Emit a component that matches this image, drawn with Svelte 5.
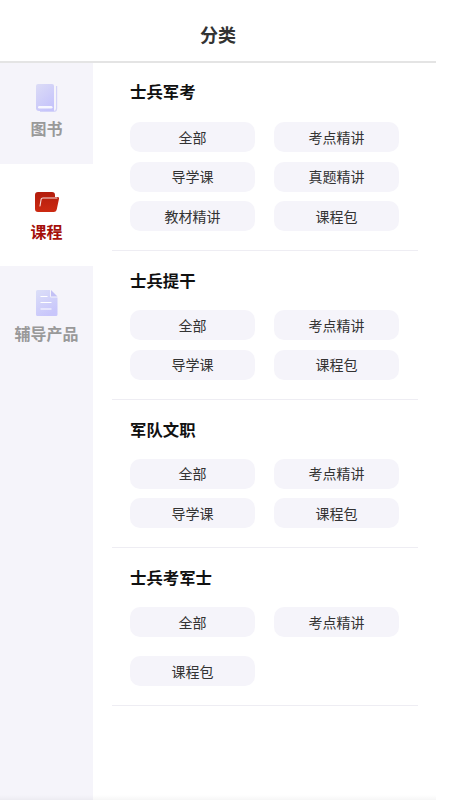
<script>
  // Sidebar tabs and course groups
  const tabs = [
    { name: 'book', label: '图书' },
    { name: 'folder', label: '课程', active: true },
    { name: 'doc', label: '辅导产品' }
  ];

  const groups = [
    { title: '士兵军考', items: ['全部', '考点精讲', '导学课', '真题精讲', '教材精讲', '课程包'] },
    { title: '士兵提干', items: ['全部', '考点精讲', '导学课', '课程包'] },
    { title: '军队文职', items: ['全部', '考点精讲', '导学课', '课程包'] },
    { title: '士兵考军士', items: ['全部', '考点精讲', '课程包'], loose: true }
  ];
</script>

<div class="page">
  <header class="top">分类</header>
  <div class="body">
    <nav class="side">
      {#each tabs as tab}
        <div class="tab {tab.name}" class:active={tab.active}>
          {#if tab.name === 'book'}
            <svg width="24" height="30" viewBox="0 0 24 30">
              <defs>
                <linearGradient id="bookFill" x1="0" y1="0" x2="0.6" y2="1">
                  <stop offset="0" stop-color="#dcdcf6" />
                  <stop offset="1" stop-color="#c6c4fb" />
                </linearGradient>
              </defs>
              <path d="M21.6 3v22.5a3 3 0 0 1-3 3H5" fill="none" stroke="#d4d3f8" stroke-width="1.2" />
              <path d="M3 1h14a2 2 0 0 1 2 2v25H4a3 3 0 0 1-3-3V3a2 2 0 0 1 2-2z" fill="url(#bookFill)" />
              <rect x="3" y="23" width="14.5" height="2.6" rx="1.3" fill="#fff" opacity="0.85" />
            </svg>
          {:else if tab.name === 'folder'}
            <svg width="24" height="20" viewBox="0 0 24 20">
              <defs>
                <linearGradient id="folderFill" x1="0" y1="0" x2="0" y2="1">
                  <stop offset="0" stop-color="#b31c0c" />
                  <stop offset="1" stop-color="#cc2a12" />
                </linearGradient>
              </defs>
              <path d="M3 0h14a3 3 0 0 1 3 3v2h2.5a1.5 1.5 0 0 1 1.5 1.8l-2.2 10.5A3 3 0 0 1 19 20H3a3 3 0 0 1-3-3V3a3 3 0 0 1 3-3z" fill="url(#folderFill)" />
              <path d="M5 14l1-6a2 2 0 0 1 2-2h14" fill="none" stroke="#fff" stroke-width="1.1" stroke-linecap="round" opacity="0.85" />
            </svg>
          {:else}
            <svg width="22" height="26" viewBox="0 0 22 26">
              <defs>
                <linearGradient id="docFill" x1="0" y1="0" x2="0.5" y2="1">
                  <stop offset="0" stop-color="#dcdff8" />
                  <stop offset="1" stop-color="#c8c6fb" />
                </linearGradient>
              </defs>
              <path d="M1.5 0H14v6a1.5 1.5 0 0 0 1.5 1.5H21.5V24.5A1.5 1.5 0 0 1 20 26H1.5A1.5 1.5 0 0 1 0 24.5V1.5A1.5 1.5 0 0 1 1.5 0z" fill="url(#docFill)" />
              <path d="M15 0l6.5 6.5H15z" fill="#c3c1f5" />
              <path d="M4.5 6.5h7M4.5 12.5h11M4.5 19h11" stroke="#fff" stroke-width="1.2" fill="none" />
            </svg>
          {/if}
          <span>{tab.label}</span>
        </div>
      {/each}
    </nav>

    <main class="list">
      {#each groups as group}
        <section class="group">
          <h2>{group.title}</h2>
          <div class="grid" class:loose={group.loose}>
            {#each group.items as item}
              <div class="chip">{item}</div>
            {/each}
          </div>
        </section>
      {/each}
    </main>
  </div>
  <div class="fade"></div>
</div>

<style>
  :global(body) {
    margin: 0;
    background: #fff;
  }

  .page {
    position: relative;
    width: 436px;
    height: 800px;
    overflow: hidden;
    display: flex;
    flex-direction: column;
    font-family: "Liberation Sans", "Noto Sans CJK SC", sans-serif;
  }

  .top {
    height: 54px;
    padding-top: 7px;
    flex: none;
    display: flex;
    align-items: center;
    justify-content: center;
    border-bottom: 2px solid #e4e4e4;
    font-size: 18px;
    font-weight: 700;
    color: #333;
  }

  .body {
    flex: 1;
    display: flex;
    min-height: 0;
  }

  .side {
    width: 93px;
    flex: none;
    background: #f5f4fa;
  }

  .tab {
    height: 101px;
    display: flex;
    flex-direction: column;
    align-items: center;
    box-sizing: border-box;
    font-size: 16px;
    font-weight: 700;
    color: #999;
  }

  .tab svg {
    display: block;
    flex: none;
  }

  .tab.book {
    padding-top: 20px;
    gap: 3px;
  }

  .tab.folder {
    height: 102px;
    padding-top: 28px;
    gap: 7px;
    background: #fff;
    color: #a50f0a;
  }

  .tab.doc {
    padding-top: 24px;
    gap: 5px;
  }

  .list {
    flex: 1;
    padding: 0 18px 0 19px;
  }

  .group {
    padding: 18px 0 19px 18px;
    border-bottom: 1px solid #eeedf3;
  }

  .group:first-child {
    padding-top: 17px;
  }

  .group:first-child h2 {
    margin-bottom: 18px;
  }

  h2 {
    margin: 0 0 17px;
    font-size: 16.4px;
    line-height: 24px;
    font-weight: 700;
    color: #111;
  }

  .grid {
    display: grid;
    grid-template-columns: 125px 125px;
    column-gap: 19px;
    row-gap: 9.5px;
  }

  .grid.loose {
    row-gap: 19px;
  }

  .chip {
    height: 30px;
    box-sizing: border-box;
    padding-bottom: 1px;
    border-radius: 10px;
    background: #f5f4fa;
    display: flex;
    align-items: center;
    justify-content: center;
    font-size: 14px;
    color: #333;
  }

  .fade {
    position: absolute;
    left: 0;
    right: 0;
    bottom: 0;
    height: 5px;
    background: linear-gradient(rgba(0, 0, 0, 0), rgba(0, 0, 0, 0.035));
  }
</style>
